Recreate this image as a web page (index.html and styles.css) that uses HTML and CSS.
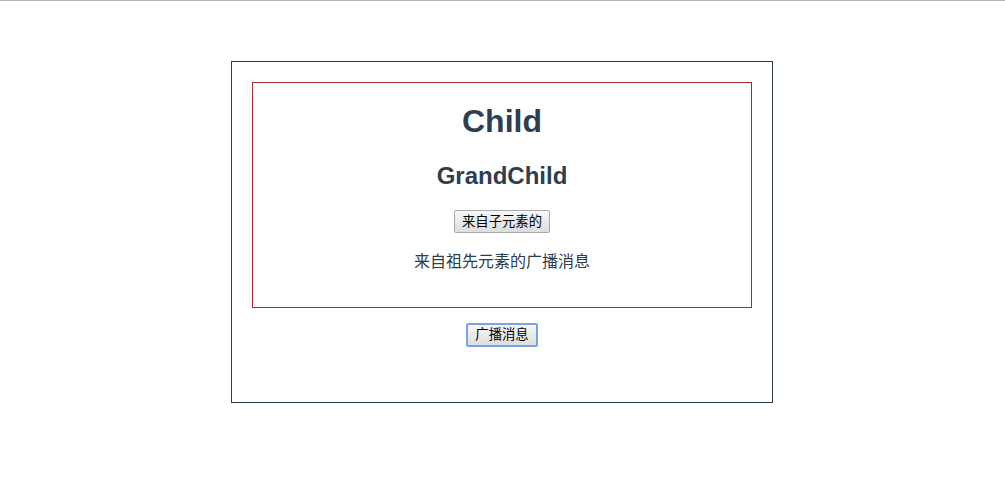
FILE: index.html
```html
<!DOCTYPE html>
<html>
<head>
<meta charset="utf-8">
<link rel="stylesheet" href="styles.css">
</head>
<body>
<div class="app">
  <div class="parent">
    <div class="child">
      <h1 class="title">Child</h1>
      <div class="grandchild">
        <h2 class="subtitle">GrandChild</h2>
        <button class="btn">来自子元素的</button>
        <p class="msg">来自祖先元素的广播消息</p>
      </div>
    </div>
    <p class="actions"><button class="btn btn-focus">广播消息</button></p>
  </div>
</div>
</body>
</html>
```
FILE: styles.css
```css
html, body {
  margin: 0;
  padding: 0;
  background: #fff;
}
body {
  border-top: 1px solid #b4b4b4;
  font-family: "Liberation Sans", "Noto Sans CJK SC", sans-serif;
}
.app {
  margin-top: 60px;
  padding-right: 1px;
  text-align: center;
  color: #2c3e50;
}
.parent {
  width: 500px;
  margin: 0 auto;
  padding: 20px 20px 55px;
  border: 1px solid #2c3e50;
}
.child {
  border: 1px solid #a52a2a;
  padding: 0 0 34px;
}
.title {
  font-size: 32px;
  font-weight: bold;
  margin: 20px 0 22px;
  line-height: 37px;
}
.subtitle {
  font-size: 24px;
  font-weight: bold;
  margin: 0 0 20px;
  line-height: 28px;
}
.btn {
  font-family: "Liberation Sans", "Noto Sans CJK SC", sans-serif;
  font-size: 13.333px;
  line-height: 17px;
  color: #000;
  padding: 1px 7px;
  border: 1px solid #a9a9a9;
  border-radius: 2px;
  background: linear-gradient(#f7f7f7, #dddddd);
  height: 23px;
  margin: 0;
}
.btn-focus {
  border: 2px solid #7ba3e6;
  padding: 0 7px;
  height: 24px;
}
.msg {
  font-size: 16px;
  line-height: 22px;
  margin: 18px 0 0;
}
.actions {
  margin: 14px 0 0;
  line-height: 24px;
}
```
